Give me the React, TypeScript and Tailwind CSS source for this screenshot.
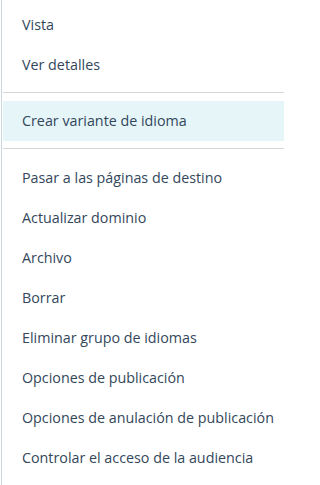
import React from "react";

const top = ["Vista", "Ver detalles"];
const bottom = [
  "Pasar a las páginas de destino",
  "Actualizar dominio",
  "Archivo",
  "Borrar",
  "Eliminar grupo de idiomas",
  "Opciones de publicación",
  "Opciones de anulación de publicación",
  "Controlar el acceso de la audiencia",
];

function Item({ label, active }: { label: string; active?: boolean }) {
  return (
    <div
      className={`h-[40px] flex items-center pl-[19px] text-[14.3px] text-[#33475b] ${
        active ? "bg-[#e5f5f8]" : ""
      }`}
    >
      {label}
    </div>
  );
}

export default function App() {
  return (
    <div
      className="w-[284px] h-[485px] bg-white flex overflow-hidden"
      style={{ fontFamily: "'Open Sans', 'Noto Sans', sans-serif" }}
    >
      <div className="w-[2px] flex justify-start">
        <div className="w-[1px] ml-[1px] bg-[#c9d6e0]" />
      </div>
      <div className="w-[1px]" />
      <div className="flex-1 flex flex-col pt-[5px]">
        {top.map((l) => (
          <Item key={l} label={l} />
        ))}
        <div className="h-[1px] bg-[#d3d7db] mt-[7px] mb-[8px]" />
        <Item label="Crear variante de idioma" active />
        <div className="h-[1px] bg-[#d3d7db] mt-[7px] mb-[9px]" />
        {bottom.map((l) => (
          <Item key={l} label={l} />
        ))}
      </div>
    </div>
  );
}
